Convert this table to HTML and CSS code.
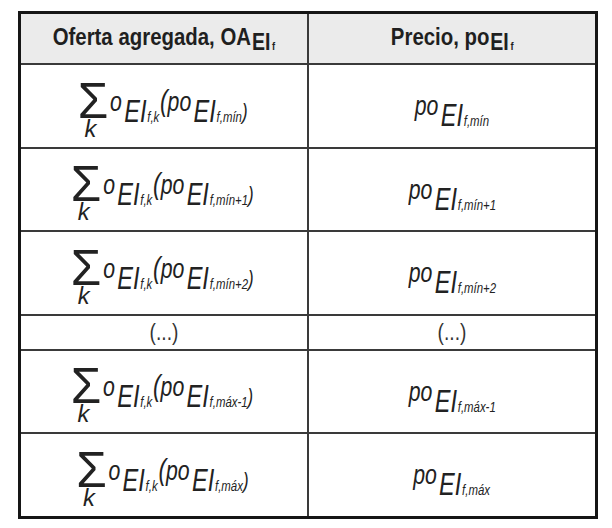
FILE: index.html
```html
<!DOCTYPE html>
<html lang="es">
<head>
<meta charset="utf-8">
<link rel="stylesheet" href="styles.css">
</head>
<body>
<table class="t">
  <thead>
    <tr class="head">
      <th><span class="hx">Oferta agregada, OA<span class="hs">EI<span class="hf">f</span></span></span></th>
      <th><span class="hx">Precio, po<span class="hs">EI<span class="hf">f</span></span></span></th>
    </tr>
  </thead>
  <tbody>
    <tr class="row">
      <td><span class="f"><span class="sum"><span class="sig">Σ</span><span class="k">k</span></span><span class="v">o</span><span class="s1">EI</span><span class="s2">f,k</span><span class="lp">(</span><span class="v">po</span><span class="s1">EI</span><span class="s2">f,mín</span><span class="rp">)</span></span></td>
      <td><span class="f"><span class="v">po</span><span class="s1">EI</span><span class="s2">f,mín</span></span></td>
    </tr>
    <tr class="row">
      <td><span class="f"><span class="sum"><span class="sig">Σ</span><span class="k">k</span></span><span class="v">o</span><span class="s1">EI</span><span class="s2">f,k</span><span class="lp">(</span><span class="v">po</span><span class="s1">EI</span><span class="s2">f,mín+1</span><span class="rp">)</span></span></td>
      <td><span class="f"><span class="v">po</span><span class="s1">EI</span><span class="s2">f,mín+1</span></span></td>
    </tr>
    <tr class="row">
      <td><span class="f"><span class="sum"><span class="sig">Σ</span><span class="k">k</span></span><span class="v">o</span><span class="s1">EI</span><span class="s2">f,k</span><span class="lp">(</span><span class="v">po</span><span class="s1">EI</span><span class="s2">f,mín+2</span><span class="rp">)</span></span></td>
      <td><span class="f"><span class="v">po</span><span class="s1">EI</span><span class="s2">f,mín+2</span></span></td>
    </tr>
    <tr class="dots">
      <td><span class="dx">(...)</span></td>
      <td><span class="dx">(...)</span></td>
    </tr>
    <tr class="row">
      <td><span class="f"><span class="sum"><span class="sig">Σ</span><span class="k">k</span></span><span class="v">o</span><span class="s1">EI</span><span class="s2">f,k</span><span class="lp">(</span><span class="v">po</span><span class="s1">EI</span><span class="s2">f,máx-1</span><span class="rp">)</span></span></td>
      <td><span class="f"><span class="v">po</span><span class="s1">EI</span><span class="s2">f,máx-1</span></span></td>
    </tr>
    <tr class="row">
      <td><span class="f"><span class="sum"><span class="sig">Σ</span><span class="k">k</span></span><span class="v">o</span><span class="s1">EI</span><span class="s2">f,k</span><span class="lp">(</span><span class="v">po</span><span class="s1">EI</span><span class="s2">f,máx</span><span class="rp">)</span></span></td>
      <td><span class="f"><span class="v">po</span><span class="s1">EI</span><span class="s2">f,máx</span></span></td>
    </tr>
  </tbody>
</table>
</body>
</html>
```

FILE: styles.css
```css
html, body {
  margin: 0;
  padding: 0;
  background: #fff;
}
body {
  padding: 11px 0 0 18px;
  font-family: "Liberation Sans", Arial, sans-serif;
  color: #222;
}
.t {
  border-collapse: collapse;
  width: 580px;
  table-layout: fixed;
  border: 3px solid #161616;
}
.t th, .t td {
  border: 2px solid #3a3a3a;
  text-align: center;
  vertical-align: middle;
  padding: 0;
}
.head th {
  background: #ebebeb;
  height: 49px;
  border-bottom-width: 1px;
}
.hx {
  display: inline-block;
  font-size: 24px;
  font-weight: bold;
  transform: scaleX(0.85);
  white-space: nowrap;
  color: #1f1f1f;
  position: relative;
  top: -2px;
}
.hs {
  position: relative;
  top: 5px;
  font-size: 23px;
  margin-left: 1px;
}
.hf {
  font-size: 11px;
  margin-left: 2px;
}
.row td {
  height: 81.5px;
}
.dots td {
  height: 33px;
}
.dx {
  display: inline-block;
  font-size: 24px;
  font-weight: 300;
  transform: scaleX(0.8);
  color: #333;
}
.f {
  display: inline-flex;
  align-items: baseline;
  font-style: italic;
  line-height: 1;
  white-space: nowrap;
  transform: scaleX(0.76);
  position: relative;
  top: -3px;
}
.sum {
  display: inline-flex;
  flex-direction: column;
  align-items: center;
  margin-right: 7px;
  position: relative;
  top: 9px;
  transform: scaleX(1.3);
}
.sig {
  font-style: normal;
  font-size: 50px;
  line-height: 34px;
}
.k {
  font-size: 24px;
  line-height: 22px;
  margin-left: -5px;
}
.v {
  font-size: 28px;
  position: relative;
  top: 2px;
}
.lp {
  font-size: 30px;
  margin-left: 1px;
  position: relative;
  top: 2px;
}
.s1 {
  font-size: 31px;
  position: relative;
  top: 13px;
  margin-left: 3px;
}
.s2 {
  font-size: 15px;
  position: relative;
  top: 13px;
  margin-left: 1px;
}
.rp {
  font-size: 22px;
  position: relative;
  top: 10px;
}
```
